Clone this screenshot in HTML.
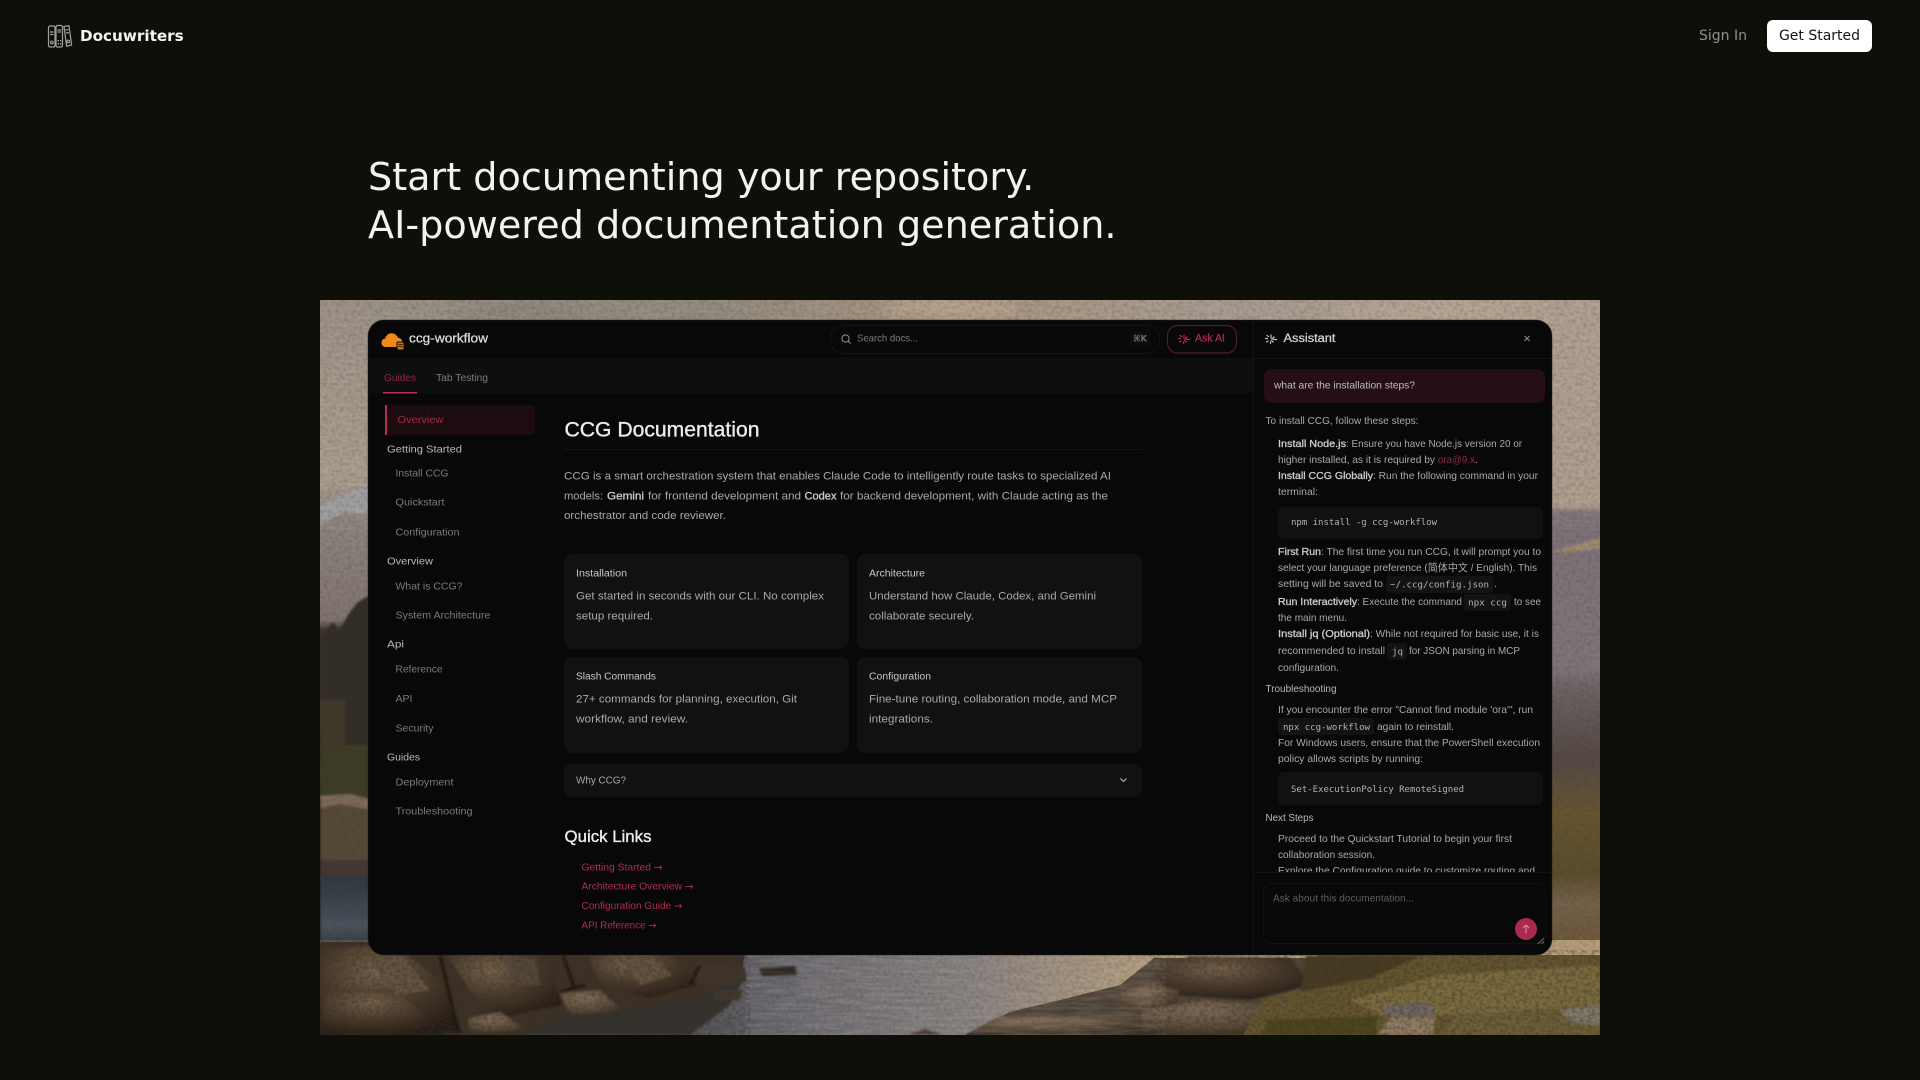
<!DOCTYPE html>
<html lang="en">
<head>
<meta charset="utf-8">
<title>Docuwriters</title>
<style>
html,body{margin:0;padding:0;width:1920px;height:1080px;overflow:hidden;background:#0f0f0a;font-family:"DejaVu Sans","Liberation Sans",sans-serif}
.brand{position:absolute;left:80px;top:26px;font-size:15.2px;line-height:20px;font-weight:700;color:#f4f4f2}
.logo{position:absolute;left:47px;top:24px;opacity:.85}
.signin{position:absolute;left:1699px;top:26px;font-size:14px;line-height:21px;color:#8f8f8c}
.cta{position:absolute;left:1767px;top:20px;width:105px;height:32px;border-radius:6px;background:#fff;color:#141414;font-size:14px;line-height:33px;text-align:center}
h1{position:absolute;left:368px;top:153px;margin:0;font-size:38.15px;line-height:48px;font-weight:400;color:#f2f2f0;white-space:nowrap}
#art{position:absolute;left:0;top:0}
#app text{font-family:"Liberation Sans","Noto Sans CJK SC",sans-serif;font-size:10.5px;dominant-baseline:middle;fill:#a9a9a9;transform:translateY(.8px)}
#app g.c text{transform:translateY(.4px)}
#app text.m{font-family:"DejaVu Sans Mono","Liberation Mono",monospace;font-size:9px;fill:#b4b4b4}
#app text.b{fill:#cfcfcf;stroke:#cfcfcf;stroke-width:.3px}
#app text.p{fill:#ae2e4e}
#app text.s{fill:#7b7b7b}
#app text.h{fill:#bababa}
#app text.t{fill:#c9c9c9}
#app text.w{fill:#ededed;stroke:#ededed;stroke-width:.35px}
#app text tspan.a{font-family:"DejaVu Sans",sans-serif}
#app{filter:blur(.35px)}
</style>
</head>
<body>
<svg id="art" width="1920" height="1080" viewBox="0 0 1920 1080">
<defs>
<linearGradient id="sky" x1="0" x2="1" y1="0" y2="0"><stop offset="0" stop-color="#9a9185"/><stop offset=".3" stop-color="#8f897e"/><stop offset=".5" stop-color="#a8937e"/><stop offset=".7" stop-color="#a59a90"/><stop offset="1" stop-color="#b3a291"/></linearGradient>
<linearGradient id="water" gradientUnits="userSpaceOnUse" x1="690" x2="1160" y1="0" y2="0"><stop offset="0" stop-color="#55545a"/><stop offset=".25" stop-color="#6d6b71"/><stop offset=".6" stop-color="#86807f"/><stop offset=".88" stop-color="#a8957e"/><stop offset="1" stop-color="#b59c7a"/></linearGradient>
<linearGradient id="rightband" x1="0" x2="0" y1="0" y2="1">
<stop offset="0" stop-color="#ad9e90"/><stop offset=".28" stop-color="#ac9c8c"/><stop offset=".29" stop-color="#7c7279"/><stop offset=".5" stop-color="#80757a"/><stop offset=".53" stop-color="#6c6263"/><stop offset=".62" stop-color="#544945"/><stop offset=".7" stop-color="#665530"/><stop offset=".78" stop-color="#5a4d2c"/><stop offset=".82" stop-color="#75614a"/><stop offset=".86" stop-color="#6e5a40"/><stop offset=".9" stop-color="#6e572a"/><stop offset=".94" stop-color="#6b634b"/><stop offset="1" stop-color="#635638"/></linearGradient>
<linearGradient id="leftband" x1="0" x2="0" y1="0" y2="1">
<stop offset="0" stop-color="#9a9085"/><stop offset=".36" stop-color="#a99c8e"/><stop offset=".43" stop-color="#8e8580"/><stop offset=".64" stop-color="#80746f"/><stop offset=".66" stop-color="#3c352c"/><stop offset="1" stop-color="#2f3022"/></linearGradient>
<linearGradient id="leftwater" x1="0" x2="0" y1="0" y2="1"><stop offset="0" stop-color="#2e383f"/><stop offset=".5" stop-color="#3d4950"/><stop offset=".75" stop-color="#4a545e"/><stop offset="1" stop-color="#363f46"/></linearGradient>
<radialGradient id="rk" cx=".4" cy=".3" r=".75"><stop offset="0" stop-color="#75614a"/><stop offset=".55" stop-color="#463729"/><stop offset="1" stop-color="#241c15"/></radialGradient>
<radialGradient id="rk2" cx=".4" cy=".3" r=".75"><stop offset="0" stop-color="#7f6c58"/><stop offset=".6" stop-color="#5d4d3a"/><stop offset="1" stop-color="#3a2f25"/></radialGradient>
<filter id="grain" x="0" y="0" width="100%" height="100%"><feTurbulence type="fractalNoise" baseFrequency=".03 .3" numOctaves="3" seed="7"/><feColorMatrix values="0 0 0 0 .6  0 0 0 0 .55  0 0 0 0 .5  1.6 0 0 0 -.55"/></filter>
<filter id="grain2" x="0" y="0" width="100%" height="100%"><feTurbulence type="fractalNoise" baseFrequency=".25 .3" numOctaves="2" seed="3"/><feColorMatrix values="0 0 0 0 .04  0 0 0 0 .03  0 0 0 0 .02  2.2 0 0 0 -.85"/></filter>
<filter id="soft"><feGaussianBlur stdDeviation="1.1"/></filter>
<filter id="soft2"><feGaussianBlur stdDeviation="6"/></filter>
<clipPath id="hero"><rect x="320" y="300" width="1280" height="735"/></clipPath>
<clipPath id="chat"><rect x="1254" y="362" width="298" height="510"/></clipPath>
</defs>
<g clip-path="url(#hero)">
<rect x="320" y="300" width="1280" height="220" fill="url(#sky)"/>
<g filter="url(#soft2)" opacity=".6"><ellipse cx="950" cy="308" rx="70" ry="8" fill="#c4b09a"/><ellipse cx="520" cy="312" rx="80" ry="8" fill="#807c74"/><ellipse cx="1420" cy="310" rx="90" ry="8" fill="#bbaa98"/></g>
<rect x="320" y="300" width="50" height="500" fill="url(#leftband)"/>
<path d="M320 504L345 495 372 480V516L345 512 320 524Z" fill="#9c9ca0" filter="url(#soft)"/>
<g filter="url(#soft)">
<path d="M325 632L333 622 339 630 350 612 358 602 372 594V800H320V636Z" fill="#322f25"/>
<path d="M320 745H372V800H320Z" fill="#3d3d26"/>
<path d="M320 700H345V750H320Z" fill="#40382a"/>
<path d="M320 796L350 794 372 800V880H320Z" fill="#574939"/>
<path d="M320 796L350 794 372 800V810L340 804 320 808Z" fill="#7d6958"/>
<path d="M320 860H372V878H320Z" fill="#443931"/>
</g>
<rect x="320" y="876" width="50" height="66" fill="url(#leftwater)" filter="url(#soft)"/>
<rect x="1548" y="300" width="52" height="735" fill="url(#rightband)"/>
<path d="M1552 552L1575 545 1600 538V548L1575 552Z" fill="#a08a70" filter="url(#soft)"/>
<!-- water and shadows -->
<rect x="320" y="940" width="1280" height="95" fill="url(#water)"/>
<path d="M500 1035L530 1003 700 992 746 975 730 1005 690 1035Z" fill="#36322e" filter="url(#soft)"/>
<!-- left rocks -->
<path d="M320 942H746L742 975 700 996 620 1010 560 1014 527 1035H320Z" fill="#3d3127"/>
<g filter="url(#soft)">
<path d="M320 948L395 945 445 985 462 1033 320 1035Z" fill="url(#rk)"/>
<path d="M325 990L395 988 445 1035H320Z" fill="url(#rk)"/>
<path d="M443 950L545 950 562 1005 500 1018 470 990Z" fill="url(#rk)"/>
<path d="M560 993L600 990 622 1010 570 1016Z" fill="url(#rk2)"/>
<path d="M586 950L670 950 697 985 650 998 600 985Z" fill="url(#rk)"/>
<path d="M695 962L745 968 746 982 700 985Z" fill="#40342a"/>
<path d="M468 1018L500 1012 527 1030 470 1034Z" fill="url(#rk2)"/>
<path d="M712 992L742 990 740 1000 715 1001Z" fill="#43372e"/>
<path d="M759 968L795 966 797 975 762 976Z" fill="#2f2822"/>
<path d="M372 962L402 955 430 990 395 995Z" fill="#64523f"/>
<path d="M620 958L650 955 672 975 640 985Z" fill="#64523f"/>
<path d="M505 958L535 958 540 985 515 985Z" fill="#55463a"/>
<path d="M440 955L458 1032M563 955L575 990M585 985L560 992M700 965L690 985" stroke="#1c1610" stroke-width="3" fill="none"/>
</g>
<!-- right rocks -->
<path d="M965 1035L1010 1012 1060 1000 1120 985 1154 958H1400V1035Z" fill="#52453a"/>
<g filter="url(#soft)">
<path d="M1154 975L1190 956 1290 958 1312 985 1250 1000 1170 995Z" fill="url(#rk)"/>
<path d="M1120 992L1152 984 1180 990 1176 1010 1128 1008Z" fill="url(#rk2)"/>
<path d="M1057 1003L1112 1000 1116 1013 1060 1015Z" fill="#473f34"/>
<path d="M1142 1010L1205 1000 1290 1008 1292 1035 1140 1035Z" fill="url(#rk2)"/>
<path d="M965 1035L1000 1016 1060 1018 1142 1012V1035Z" fill="url(#rk2)"/>
<path d="M906 1035L925 1029 942 1035Z" fill="#453a30"/>
</g>
<!-- grass -->
<path d="M1243 1035L1262 1000 1312 985 1318 955H1600V1035Z" fill="#64552f"/>
<g filter="url(#soft)">
<path d="M1306 956H1420L1370 978 1300 992Z" fill="#463a22"/>
<path d="M1350 1000L1440 975 1600 965V1005L1460 1015 1380 1015Z" fill="#7a6a3c"/>
<path d="M1268 1020L1377 1016 1377 1035H1262Z" fill="#4e451d"/>
<path d="M1377 1035L1390 1018 1436 1016 1432 1035Z" fill="#8f7c62"/>
<path d="M1380 1006L1428 1002 1436 1014 1392 1018Z" fill="#6f6862"/>
<path d="M1440 1035L1456 1015 1600 1005V1035Z" fill="#6c5f38"/>
<path d="M1560 1010L1600 1005V1025L1570 1022Z" fill="#807868"/>
</g>
<rect x="320" y="300" width="1280" height="230" filter="url(#grain)" opacity=".2"/>
<rect x="746" y="955" width="420" height="80" filter="url(#grain)" opacity=".25"/>
<rect x="320" y="300" width="1280" height="735" filter="url(#grain2)" opacity=".2"/>
<rect x="320" y="940" width="430" height="95" filter="url(#grain2)" opacity=".35"/>
<rect x="1150" y="950" width="450" height="85" filter="url(#grain2)" opacity=".35"/>
</g>
<rect x="368" y="320" width="1184" height="635" rx="16" fill="#080808" stroke="#222" stroke-opacity=".5"/>
</svg>

<svg class="logo" width="26" height="25" viewBox="0 0 26 25" fill="none" stroke="#b8b8b6" stroke-width="1.2">
<rect x="1.5" y="2" width="6.5" height="21" rx="1.6"/>
<rect x="9" y="1.5" width="6.5" height="21.5" rx="1.6"/>
<path d="M17 2.5l5-.8 2.6 19.3-5 1.2z"/>
<path d="M3 8h3.5M10.500 6h3.500M10.500 8h3.500M18.500 6l3-.4M3 10.500h3.500M19 9l3-.4"/>
<circle cx="4.800" cy="18.500" r="1.300"/><rect x="10.500" y="16" width="1.400" height="1.400" fill="#b8b8b6" stroke="none"/><rect x="13" y="16" width="1.400" height="1.400" fill="#b8b8b6" stroke="none"/><rect x="10.500" y="19" width="1.400" height="1.400" fill="#b8b8b6" stroke="none"/><rect x="13" y="19" width="1.400" height="1.400" fill="#b8b8b6" stroke="none"/><circle cx="21.300" cy="17.500" r="1.300"/>
</svg>
<div class="brand">Docuwriters</div>
<div class="signin">Sign In</div>
<div class="cta">Get Started</div>
<h1>Start documenting your repository.<br>AI-powered documentation generation.</h1>

<svg id="app" style="position:absolute;left:0;top:0" width="1920" height="1080" viewBox="0 0 1920 1080" fill="none">
<!-- tab strip -->
<rect x="369" y="358" width="884" height="35" fill="#0e0e0e"/>
<rect x="1253" y="321" width="1" height="633" fill="#141414"/>
<rect x="1254" y="358" width="297" height="1" fill="#141414"/>
<!-- header -->
<path d="M386 347c-3 0-4.500-2-4.500-4.300 0-2.300 1.700-4 3.800-4.200.7-3 3.200-5.200 6.300-5.200 3 0 5.400 1.800 6.300 4.500 2.500.2 4.600 2.200 4.600 4.700 0 2.300-1.800 4.500-4 4.500z" fill="#ee8a1c"/>
<rect x="397" y="342" width="7" height="8" rx="1" fill="#c4721a" stroke="#080808" stroke-width="1"/>
<path d="M398.500 344.500h4M398.500 346.500h4" stroke="#080808" stroke-width=".8"/>
<text x="409" y="338.500" textLength="79" lengthAdjust="spacingAndGlyphs" class="b" style="font-size:12.500px;fill:#dcdcdc">ccg-workflow</text>
<rect x="830.500" y="325.500" width="329" height="28" rx="13" stroke="#141414" fill="#080808"/>
<circle cx="845.500" cy="338.500" r="3.600" stroke="#999" stroke-width="1"/><path d="M848.200 341.200l2.300 2.300" stroke="#999" stroke-width="1"/>
<text x="857" y="338" textLength="61" lengthAdjust="spacingAndGlyphs" class="s" style="font-size:10.500px">Search docs...</text>
<rect x="1130" y="331" width="20" height="15" rx="3" fill="#0c0c0c"/>
<text x="1133" y="338" textLength="14" lengthAdjust="spacingAndGlyphs" style="font-size:9px;fill:#6e6e6e;font-family:'DejaVu Sans',sans-serif;font-weight:700">⌘K</text>
<rect x="1167.500" y="325.500" width="69" height="27.500" rx="10" stroke="#4d1f2c" stroke-width="1.200" fill="#0a0708"/>
<g stroke="#ab2d4d" stroke-width="1.300" stroke-linecap="round"><path d="M1184 335v3M1187 337l-2 2M1189.500 339.500h-3M1186 342l-1.500-1.500M1183.500 343.500v-1.500M1179.500 342l1.500-1M1178.500 338.500h2M1180 335.500l1.500 1"/></g>
<text x="1195" y="338" textLength="30" lengthAdjust="spacingAndGlyphs" class="p" style="font-size:11px;stroke:#a92c4c;stroke-width:.25px">Ask AI</text>
<!-- tabs -->
<text x="384" y="377.500" textLength="32" lengthAdjust="spacingAndGlyphs" class="p" style="font-size:10.500px;fill:#8e2a42">Guides</text>
<text x="436" y="377.500" textLength="52" lengthAdjust="spacingAndGlyphs" class="s" style="font-size:10.500px">Tab Testing</text>
<rect x="383" y="392" width="34" height="1.500" fill="#b5304f"/>
<!-- sidebar -->
<rect x="385" y="405" width="150" height="30" rx="3" fill="#1c0c10"/>
<rect x="385" y="405" width="2" height="30" fill="#b5304f"/>
<text x="397.500" y="419.500" textLength="46" lengthAdjust="spacingAndGlyphs" class="p" style="font-size:10.500px;fill:#a22a48">Overview</text>
<text x="387" y="449" textLength="75" lengthAdjust="spacingAndGlyphs" class="h">Getting Started</text>
<text x="395.500" y="473" textLength="53" lengthAdjust="spacingAndGlyphs" class="s">Install CCG</text>
<text x="395.500" y="502" textLength="49" lengthAdjust="spacingAndGlyphs" class="s">Quickstart</text>
<text x="395.500" y="532" textLength="64" lengthAdjust="spacingAndGlyphs" class="s">Configuration</text>
<text x="387" y="561" textLength="46" lengthAdjust="spacingAndGlyphs" class="h">Overview</text>
<text x="395.500" y="586" textLength="67" lengthAdjust="spacingAndGlyphs" class="s">What is CCG?</text>
<text x="395.500" y="615" textLength="95" lengthAdjust="spacingAndGlyphs" class="s">System Architecture</text>
<text x="387" y="644" textLength="17" lengthAdjust="spacingAndGlyphs" class="h">Api</text>
<text x="395.500" y="669" textLength="47" lengthAdjust="spacingAndGlyphs" class="s">Reference</text>
<text x="395.500" y="698.500" textLength="17" lengthAdjust="spacingAndGlyphs" class="s">API</text>
<text x="395.500" y="728" textLength="38" lengthAdjust="spacingAndGlyphs" class="s">Security</text>
<text x="387" y="757" textLength="33" lengthAdjust="spacingAndGlyphs" class="h">Guides</text>
<text x="395.500" y="782" textLength="58" lengthAdjust="spacingAndGlyphs" class="s">Deployment</text>
<text x="395.500" y="811" textLength="77" lengthAdjust="spacingAndGlyphs" class="s">Troubleshooting</text>
<!-- main -->
<text x="564.500" y="430" textLength="195" lengthAdjust="spacingAndGlyphs" class="w" style="font-size:21px">CCG Documentation</text>
<rect x="564" y="449" width="578" height="1" fill="#141414"/>
<text x="564" y="476" textLength="547" lengthAdjust="spacingAndGlyphs" style="font-size:11px">CCG is a smart orchestration system that enables Claude Code to intelligently route tasks to specialized AI</text>
<text x="564" y="496" textLength="39" lengthAdjust="spacingAndGlyphs" style="font-size:11px">models:</text>
<text x="607" y="496" textLength="37" lengthAdjust="spacingAndGlyphs" class="b" style="font-size:11px">Gemini</text>
<text x="648" y="496" textLength="153" lengthAdjust="spacingAndGlyphs" style="font-size:11px">for frontend development and</text>
<text x="804.500" y="496" textLength="32" lengthAdjust="spacingAndGlyphs" class="b" style="font-size:11px">Codex</text>
<text x="840" y="496" textLength="268" lengthAdjust="spacingAndGlyphs" style="font-size:11px">for backend development, with Claude acting as the</text>
<text x="564" y="515.500" textLength="162" lengthAdjust="spacingAndGlyphs" style="font-size:11px">orchestrator and code reviewer.</text>
<g fill="#111">
<rect x="564" y="554" width="285" height="95" rx="8"/>
<rect x="857" y="554" width="285" height="95" rx="8"/>
<rect x="564" y="657" width="285" height="96" rx="8"/>
<rect x="857" y="657" width="285" height="96" rx="8"/>
<rect x="564" y="764" width="578" height="33" rx="8"/>
</g>
<text x="576" y="573" textLength="51" lengthAdjust="spacingAndGlyphs" class="t" style="font-size:10px">Installation</text>
<text x="576" y="596" textLength="248" lengthAdjust="spacingAndGlyphs" style="font-size:11px">Get started in seconds with our CLI. No complex</text>
<text x="576" y="616" textLength="77" lengthAdjust="spacingAndGlyphs" style="font-size:11px">setup required.</text>
<text x="869" y="573" textLength="56" lengthAdjust="spacingAndGlyphs" class="t" style="font-size:10px">Architecture</text>
<text x="869" y="596" textLength="227" lengthAdjust="spacingAndGlyphs" style="font-size:11px">Understand how Claude, Codex, and Gemini</text>
<text x="869" y="616" textLength="105" lengthAdjust="spacingAndGlyphs" style="font-size:11px">collaborate securely.</text>
<text x="576" y="676" textLength="80" lengthAdjust="spacingAndGlyphs" class="t" style="font-size:10px">Slash Commands</text>
<text x="576" y="699" textLength="221" lengthAdjust="spacingAndGlyphs" style="font-size:11px">27+ commands for planning, execution, Git</text>
<text x="576" y="719" textLength="112" lengthAdjust="spacingAndGlyphs" style="font-size:11px">workflow, and review.</text>
<text x="869" y="676" textLength="62" lengthAdjust="spacingAndGlyphs" class="t" style="font-size:10px">Configuration</text>
<text x="869" y="699" textLength="248" lengthAdjust="spacingAndGlyphs" style="font-size:11px">Fine-tune routing, collaboration mode, and MCP</text>
<text x="869" y="719" textLength="64" lengthAdjust="spacingAndGlyphs" style="font-size:11px">integrations.</text>
<text x="576" y="780" textLength="50" lengthAdjust="spacingAndGlyphs" class="t" style="font-size:10.500px;fill:#a8a8a8">Why CCG?</text>
<path d="M1120.500 778.500l3 3 3-3" stroke="#a0a0a0" stroke-width="1.300"/>
<text x="564.500" y="836.500" textLength="87" lengthAdjust="spacingAndGlyphs" class="w" style="font-size:17px">Quick Links</text>
<text x="581.500" y="867" textLength="81" lengthAdjust="spacingAndGlyphs" class="p">Getting Started <tspan class="a">→</tspan></text>
<text x="581.500" y="886" textLength="112" lengthAdjust="spacingAndGlyphs" class="p">Architecture Overview <tspan class="a">→</tspan></text>
<text x="581.500" y="905.500" textLength="101" lengthAdjust="spacingAndGlyphs" class="p">Configuration Guide <tspan class="a">→</tspan></text>
<text x="581.500" y="925" textLength="75" lengthAdjust="spacingAndGlyphs" class="p">API Reference <tspan class="a">→</tspan></text>
<!-- assistant -->
<g stroke="#bcbcbc" stroke-width="1.300" stroke-linecap="round"><path d="M1271 335v3M1274 337l-2 2M1276.500 339.500h-3M1273 342l-1.500-1.500M1270.500 343.500v-1.500M1266.500 342l1.500-1M1265.500 338.500h2M1267 335.500l1.500 1"/></g>
<text x="1283.500" y="338" textLength="52" lengthAdjust="spacingAndGlyphs" class="b" style="font-size:11.500px;fill:#d4d4d4">Assistant</text>
<path d="M1524.500 336l5 5M1529.500 336l-5 5" stroke="#8a8a8a" stroke-width="1.100"/>
<rect x="1264" y="369" width="281" height="34" rx="8" fill="#260f14"/>
<text x="1274" y="385" textLength="141" lengthAdjust="spacingAndGlyphs" style="font-size:10.500px;fill:#bdbdbd">what are the installation steps?</text>
<g clip-path="url(#chat)" class="c">
<text x="1265.500" y="421" textLength="153" lengthAdjust="spacingAndGlyphs">To install CCG, follow these steps:</text>
<text x="1278" y="444" textLength="68" lengthAdjust="spacingAndGlyphs" class="b">Install Node.js</text>
<text x="1346" y="444" textLength="176" lengthAdjust="spacingAndGlyphs">: Ensure you have Node.js version 20 or</text>
<text x="1278" y="460" textLength="157" lengthAdjust="spacingAndGlyphs">higher installed, as it is required by</text>
<text x="1438" y="460" textLength="37" lengthAdjust="spacingAndGlyphs" class="p" style="fill:#8c2a40">ora@9.x</text>
<text x="1475" y="460">.</text>
<text x="1278" y="476" textLength="95" lengthAdjust="spacingAndGlyphs" class="b">Install CCG Globally</text>
<text x="1373" y="476" textLength="165" lengthAdjust="spacingAndGlyphs">: Run the following command in your</text>
<text x="1278" y="492" textLength="40" lengthAdjust="spacingAndGlyphs">terminal:</text>
<rect x="1278" y="507" width="265" height="32" rx="6" fill="#111"/>
<text x="1291" y="522" textLength="146" lengthAdjust="spacingAndGlyphs" class="m">npm install -g ccg-workflow</text>
<text x="1278" y="552" textLength="43" lengthAdjust="spacingAndGlyphs" class="b">First Run</text>
<text x="1321" y="552" textLength="220" lengthAdjust="spacingAndGlyphs">: The first time you run CCG, it will prompt you to</text>
<text x="1278" y="568" textLength="259" lengthAdjust="spacingAndGlyphs">select your language preference (简体中文 / English). This</text>
<text x="1278" y="584" textLength="105" lengthAdjust="spacingAndGlyphs">setting will be saved to</text>
<rect x="1386" y="576" width="107" height="17" rx="3" fill="#131313"/>
<text x="1390" y="584.500" textLength="99" lengthAdjust="spacingAndGlyphs" class="m">~/.ccg/config.json</text>
<text x="1494" y="584">.</text>
<text x="1278" y="602" textLength="79" lengthAdjust="spacingAndGlyphs" class="b">Run Interactively</text>
<text x="1357" y="602" textLength="105" lengthAdjust="spacingAndGlyphs">: Execute the command</text>
<rect x="1464" y="594" width="47" height="17" rx="3" fill="#131313"/>
<text x="1468" y="602.500" textLength="39" lengthAdjust="spacingAndGlyphs" class="m">npx ccg</text>
<text x="1514" y="602" textLength="27" lengthAdjust="spacingAndGlyphs">to see</text>
<text x="1278" y="618" textLength="69" lengthAdjust="spacingAndGlyphs">the main menu.</text>
<text x="1278" y="634" textLength="92" lengthAdjust="spacingAndGlyphs" class="b">Install jq (Optional)</text>
<text x="1370" y="634" textLength="169" lengthAdjust="spacingAndGlyphs">: While not required for basic use, it is</text>
<text x="1278" y="651" textLength="107" lengthAdjust="spacingAndGlyphs">recommended to install</text>
<rect x="1387" y="643" width="20" height="17" rx="3" fill="#131313"/>
<text x="1392" y="651.500" textLength="11" lengthAdjust="spacingAndGlyphs" class="m">jq</text>
<text x="1409" y="651" textLength="111" lengthAdjust="spacingAndGlyphs">for JSON parsing in MCP</text>
<text x="1278" y="668" textLength="61" lengthAdjust="spacingAndGlyphs">configuration.</text>
<text x="1265.500" y="689" textLength="71" lengthAdjust="spacingAndGlyphs" class="h">Troubleshooting</text>
<text x="1278" y="710" textLength="255" lengthAdjust="spacingAndGlyphs">If you encounter the error "Cannot find module 'ora'", run</text>
<rect x="1278" y="718" width="96" height="17" rx="3" fill="#131313"/>
<text x="1283" y="727" textLength="87" lengthAdjust="spacingAndGlyphs" class="m">npx ccg-workflow</text>
<text x="1377" y="727" textLength="77" lengthAdjust="spacingAndGlyphs">again to reinstall.</text>
<text x="1278" y="743" textLength="262" lengthAdjust="spacingAndGlyphs">For Windows users, ensure that the PowerShell execution</text>
<text x="1278" y="759" textLength="145" lengthAdjust="spacingAndGlyphs">policy allows scripts by running:</text>
<rect x="1278" y="772" width="265" height="33" rx="6" fill="#111"/>
<text x="1291" y="789" textLength="173" lengthAdjust="spacingAndGlyphs" class="m">Set-ExecutionPolicy RemoteSigned</text>
<text x="1265.500" y="818" textLength="48" lengthAdjust="spacingAndGlyphs" class="h">Next Steps</text>
<text x="1278" y="839" textLength="234" lengthAdjust="spacingAndGlyphs">Proceed to the Quickstart Tutorial to begin your first</text>
<text x="1278" y="855" textLength="97" lengthAdjust="spacingAndGlyphs">collaboration session.</text>
<text x="1278" y="871" textLength="257" lengthAdjust="spacingAndGlyphs">Explore the Configuration guide to customize routing and</text>
</g>
<rect x="1254" y="872" width="297" height="1" fill="#121212"/>
<rect x="1263.500" y="883.500" width="282" height="60" rx="8" stroke="#121212" fill="#080808"/>
<text x="1273" y="898" textLength="141" lengthAdjust="spacingAndGlyphs" style="font-size:10.500px;fill:#5e5e5e">Ask about this documentation...</text>
<circle cx="1526" cy="929" r="11" fill="#a82a4f"/>
<path d="M1526 933v-7.500M1523 928l3-3 3 3" stroke="#d88a9c" stroke-width="1.100"/>
<path d="M1538 944l6-6M1541.500 944l2.500-2.500" stroke="#8a8a8a" stroke-width=".8"/>
</svg>
</body>
</html>
